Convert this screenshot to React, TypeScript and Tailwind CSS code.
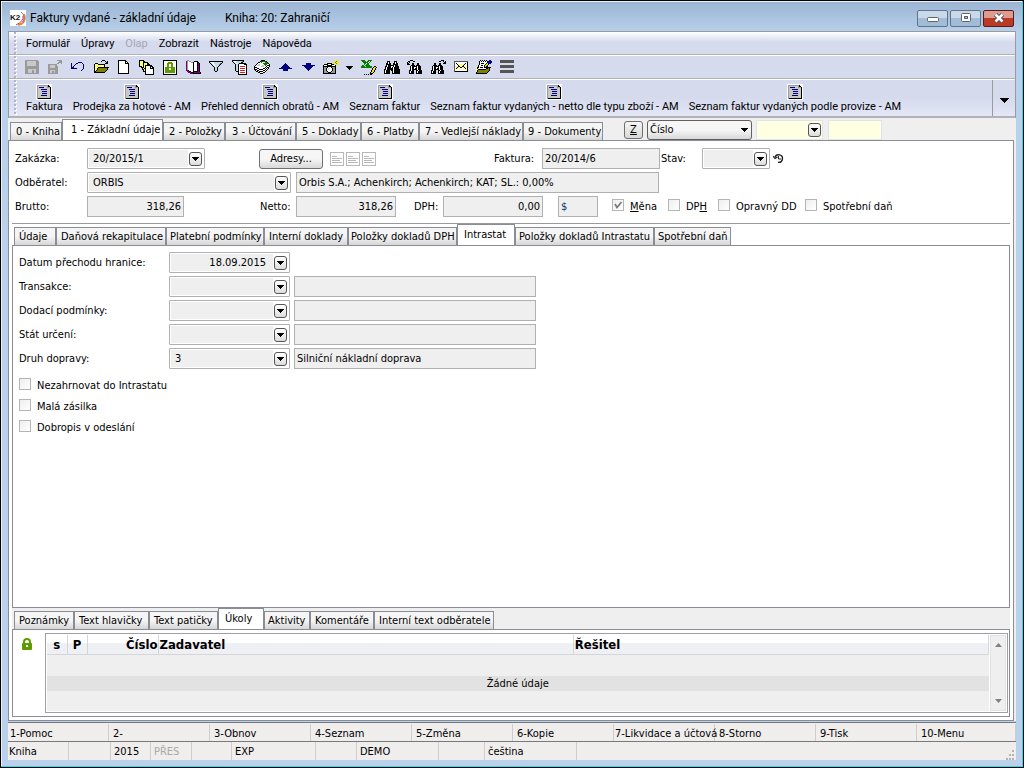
import type { ReactNode } from "react"
import clsx from "clsx"

const COLORS: Record<string, string> = {
  k: "#000000",
  w: "#ffffff",
  n: "#000080",
  b: "#0000ff",
  y: "#ffff7a",
  Y: "#f2e600",
  o: "#808000",
  g: "#9a9a9a",
  l: "#c8c8c8",
  G: "#008000",
  L: "#5c9c00",
  r: "#d02020",
  p: "#800080",
  d: "#555555",
  t: "#b8dce8",
}

const Pixels = ({ rows }: { rows: string[] }) => (
  <svg
    width="16"
    height="16"
    viewBox="0 0 16 16"
    shapeRendering="crispEdges"
    aria-hidden="true"
  >
    {rows.flatMap((row, y) =>
      row
        .split("")
        .map((c, x) =>
          COLORS[c] ? (
            <rect key={`${x}-${y}`} x={x} y={y} width="1" height="1" fill={COLORS[c]} />
          ) : null
        )
    )}
  </svg>
)

const SAVE = [
  ".ggggggggggggg..",
  ".gglllllllllggg.",
  ".gglllllllllggg.",
  ".gglllllllllggg.",
  ".gglllllllllggg.",
  ".gglllllllllggg.",
  ".gggggggggggggg.",
  ".gggggggggggggg.",
  ".gggggggggggggg.",
  ".gggllllllllggg.",
  ".gggllllggllggg.",
  ".gggllllggllggg.",
  ".gggllllggllggg.",
  ".gggggggggggggg.",
]

const SAVE_AS = [
  "..........ggggg.",
  "............ggg.",
  "...........gggg.",
  "..........gg..g.",
  ".ggggggggg......",
  ".gglllllgg......",
  ".gglllllggg.....",
  ".gglllllggg.....",
  ".gggggggggg.....",
  ".gggggggggg.....",
  ".gglllllggg.....",
  ".ggllgglggg.....",
  ".ggllgglggg.....",
  ".gggggggggg.....",
]

const UNDO = [
  "................",
  "................",
  "........nnnn....",
  ".n....nn....n...",
  ".n...n.......n..",
  ".n..n........n..",
  ".n.n.........n..",
  ".nnn.........n..",
  ".nnnnnn......n..",
  "............n...",
  "...........n....",
]

const OPEN = [
  ".........kkk....",
  "........k...k.k.",
  ".............kk.",
  "..kkk.......kkk.",
  ".kyyykkkkkkk....",
  ".kyyyyyyyyyk....",
  ".kyyyyyyyyyk....",
  ".kyyykkkkkkkkkkk",
  ".kyykoooooooook.",
  ".kyykoooooooook.",
  ".kykoooooooook..",
  ".kkoooooooook...",
  ".kkkkkkkkkkk....",
]

const NEW = [
  "..kkkkkkkk......",
  "..kwwwwwwkk.....",
  "..kwwwwwwkwk....",
  "..kwwwwwwkkkk...",
  "..kwwwwwwwwwk...",
  "..kwwwwwwwwwk...",
  "..kwwwwwwwwwk...",
  "..kwwwwwwwwwk...",
  "..kwwwwwwwwwk...",
  "..kwwwwwwwwwk...",
  "..kwwwwwwwwwk...",
  "..kwwwwwwwwwk...",
  "..kwwwwwwwwwk...",
  "..kkkkkkkkkkk...",
]

const COPIES = [
  "kkkkk...........",
  "kyyykk..........",
  "kyyykkkkk.......",
  "kyyykyyykk......",
  "kyyykyyykkk.....",
  "kyyykykkkkkkk...",
  "kkkykykwwwwkkk..",
  "..kkkykwwwwkwkk.",
  "...kykkwwwwkkkk.",
  "...kkykwwwwwwwk.",
  "....kykwwwwwwwk.",
  "....kkkwwwwwwwk.",
  "......kwwwwwwwk.",
  "......kwwwwwwwk.",
  "......kkkkkkkkk.",
]

const LOCK = [
  ".kkkkkkkkkkkkkk.",
  ".kwwwwwwwwwwwwk.",
  ".kwwwwLLLLwwwwk.",
  ".kwwwLLLLLLwwwk.",
  ".kwwwLLwwLLwwwk.",
  ".kwwwLLwwLLwwwk.",
  ".kwwwLLwwLLwwwk.",
  ".kwLLLLLLLLLLwk.",
  ".kwLLLLwwLLLLwk.",
  ".kwLLLLwwLLLLwk.",
  ".kwLLLLLLLLLLwk.",
  ".kwLLLLLLLLLLwk.",
  ".kwLLLLLLLLLLwk.",
  ".kwwwwwwwwwwwwk.",
  ".kkkkkkkkkkkkkk.",
]

const BOOK = [
  "..gg............",
  ".pgwgg...kkkk...",
  ".pgwwwggkwwwkk..",
  ".pgwwwwwkwwwkpk.",
  ".pgwwwwwkwwwkpk.",
  ".pgwwwwwkwwwkpk.",
  ".pgwwwwwkwwwkpk.",
  ".pgwwwwwkwwwkpk.",
  ".pgwwwwwkwwwkpk.",
  ".pgwwwwwkwwwkpk.",
  ".ppkwwwwkwwwkpk.",
  "..ppkkwwkkkkkpk.",
  "...pppkkkppppppk",
  ".....pppkkkkkkkk",
]

const FILTER = [
  "................",
  ".kkkkkkkkkkkkkk.",
  ".ktwwwttttttttk.",
  "..ktwwttttttok..",
  "...ktwwttttok...",
  "....ktwttttk....",
  ".....ktwttk.....",
  "......kttk......",
  "......kttk......",
  "......kttk......",
  "......kttk......",
  ".......kk.......",
]

const FILTER_DOC = [
  ".kkkkkkkkkkkk...",
  ".ktwwttttttok...",
  "..ktwtttttkk....",
  "...ktwttkkkkkkk.",
  "....kttkwwwwwkkk",
  "....kttkwwwwwwwk",
  "....kttkwrrrrrwk",
  "....kttkwwwwwwwk",
  "....kttkwrrrrrwk",
  "....kttkwwwwwwwk",
  "....kttkwrrrrrwk",
  ".....kkkwwwwwwwk",
  ".......kwrrrrrwk",
  ".......kwwwwwwwk",
  ".......kkkkkkkkk",
]

const STACK = [
  ".......kkkk.....",
  "......kGGGGGk...",
  "....kkwGwwwGGk..",
  "...kwwwwwGGGGGk.",
  "..kwllwwwwGGGwwk",
  ".kwlllwwllwGwkkk",
  "kwwwwwwlllwwkwwk",
  "kkkwwwwwwwwkwkk.",
  "kwwkkwwwwkkwkwk.",
  "kkkwwkkkkwwkwk..",
  ".kwkkwwwwkkwk...",
  "..kkwkkkkwwk....",
  "....kkwwwkk.....",
  "......kkk.......",
]

const UP = [
  "................",
  "................",
  "................",
  "........n.......",
  ".......nnn......",
  "......nnnnn.....",
  ".....nnnnnnn....",
  "....nnnnnnnnn...",
  "..nnnnnnnnnnnnn.",
  "......nnnnn.....",
  "......nnnnn.....",
]

const DOWN = [
  "................",
  "................",
  "................",
  "......nnnnn.....",
  "......nnnnn.....",
  "..nnnnnnnnnnnnn.",
  "....nnnnnnnnn...",
  ".....nnnnnnn....",
  "......nnnnn.....",
  ".......nnn......",
  "........n.......",
]

const CAMERA = [
  "...........Y.Y.Y",
  "............YoY.",
  "..........YYoYYY",
  "....kkkkk...YoY.",
  ".kkkkwwwkkkY.Y.Y",
  "kwwwkkkkkwwwk...",
  "kkkkkkkkkkkkk...",
  "kgggkwwwkgggk...",
  "kggkwttwwkggk...",
  "kggkwtwwwkggk...",
  "kggkwwwwwkggk...",
  "kgggkwwwkgggk...",
  "kggggkkkggggk...",
  "kkkkkkkkkkkkk...",
]

const EXCEL = [
  "GGGG...GGGG.....",
  ".GGGG.GGwG......",
  "..GGGGGwG.......",
  "...GGwGG........",
  "...GwGGG........",
  ".GGwGGGGG.......",
  "GGGG.GGGGGG..kk.",
  "GGGGGGGGGGG.kYYk",
  "...........kYYk.",
  "...........kYYk.",
  "..........kYYk..",
  "..........kYYk..",
  ".........kYYk...",
  ".........kkk....",
  "...k.k.k.kk.....",
]

const FIND = [
  "................",
  "...kkk....kkk...",
  "...kwk....kwk...",
  "..kkwkk..kkwkk..",
  "..kkkkk..kkkkk..",
  "..kwkkkkkkwkkk..",
  ".kkwkkkwwkwkkkk.",
  ".kwkkkkwkwkkkkk.",
  ".kwkkkkkkwkkkkk.",
  "kkwkkkkkkwkkkkkk",
  "kwkkkk.kkwkkkkkk",
  "kwkkkk..kwkkkkkk",
  "kwkkkk..kwkkkkkk",
  "kkkkkk..kkkkkkkk",
]

const FIND_PREV = [
  "...kkk..........",
  ".kk...kk........",
  "k.k.............",
  "kk...kk...kk....",
  "kkk..kk...kk....",
  "....kkkk.kkkk...",
  "...kwkkkkkwkkk..",
  "...kwkkwwkwkkk..",
  "...kwkkwkkwkkk..",
  "...kwkkkkkwkkk..",
  "..kkwkk..kkwkkk.",
  "..kwkkk..kwkkkk.",
  "..kwkkk..kwkkkk.",
  "..kkkkk..kkkkkk.",
]

const FIND_NEXT = [
  "...........kkk..",
  ".........kk..k.k",
  "..............kk",
  "....kk...kk..kkk",
  "....kk...kk.....",
  "...kkkk.kkkk....",
  "..kwkkkkkwkkk...",
  "..kwkkwwkwkkk...",
  "..kwkkwkkwkkk...",
  "..kwkkkkkwkkk...",
  ".kkwkk..kkwkkk..",
  ".kwkkk..kwkkkk..",
  ".kwkkk..kwkkkk..",
  ".kkkkk..kkkkkk..",
]

const MAIL = [
  "................",
  ".dddddddddddddd.",
  ".dywwwwwwwwwwyk.",
  ".dwkwwwwwwwwkwk.",
  ".dwwkyyyyyykwwk.",
  ".dwwwkyyyykwwwk.",
  ".dwyykkyykkyywk.",
  ".dwykywkkwykywk.",
  ".dwkyyywwyyykwk.",
  ".dyywwwwwwwwyyk.",
  ".dywwwwwwwwwwyk.",
  ".dkkkkkkkkkkkkk.",
]

const NOTE = [
  "....k.k.k.k..nn.",
  "...kwkwkwkwknnnn",
  "...kwwwwwwwknbnn",
  "...kwkkkwwkYnnn.",
  "...kwwwwwkYYk...",
  "..kwwkkwkYYk....",
  "..kwwwwwkYkk....",
  "ykkwkkkwkkkkkkk.",
  "ykwwwwwwwwkkok..",
  "yykkkkkkkkoook..",
  "ykoooooooooook..",
  "ykooooooooook...",
  "kooooooooook....",
  "kkkkkkkkkkk.....",
]

const LINES = [
  ".dddddddddddddd.",
  ".dddddddddddddd.",
  ".dddddddddddddd.",
  "................",
  "................",
  ".dddddddddddddd.",
  ".dddddddddddddd.",
  ".dddddddddddddd.",
  "................",
  "................",
  ".dddddddddddddd.",
  ".dddddddddddddd.",
  ".dddddddddddddd.",
]

const REPORT = [
  "wwwwwwwwwwwwwwww",
  "wgggggggggggkwww",
  "wglllllllllgkkww",
  "wglnnnnnlllgggkw",
  "wgllllllllllllkw",
  "wglllnnnnnnlllkw",
  "wgllllllllllllkw",
  "wgllllnnnnnlllkw",
  "wgllllllllllllkw",
  "wgllllnnnnnlllkw",
  "wgllllllllllllkw",
  "wglllnnnnnnlllkw",
  "wgllllllllllllkw",
  "wgllllllllllllkw",
  "wgkkkkkkkkkkkkkw",
  "wwwwwwwwwwwwwwww",
]

const tools = [
  { label: "Uložit", rows: SAVE },
  { label: "Uložit jako", rows: SAVE_AS },
  { label: "Zpět", rows: UNDO },
  { label: "Otevřít", rows: OPEN },
  { label: "Nový", rows: NEW },
  { label: "Kopie", rows: COPIES },
  { label: "Zámek", rows: LOCK },
  { label: "Kniha", rows: BOOK },
  { label: "Filtr", rows: FILTER },
  { label: "Filtr záznamů", rows: FILTER_DOC },
  { label: "Doklady", rows: STACK },
  { label: "Nahoru", rows: UP },
  { label: "Dolů", rows: DOWN },
  { label: "Snímek", rows: CAMERA },
]

const moreTools = [
  { label: "Excel", rows: EXCEL },
  { label: "Hledat", rows: FIND },
  { label: "Hledat předchozí", rows: FIND_PREV },
  { label: "Hledat další", rows: FIND_NEXT },
  { label: "E-mail", rows: MAIL },
  { label: "Poznámka", rows: NOTE },
  { label: "Seznam", rows: LINES },
]

const reports = [
  "Faktura",
  "Prodejka za hotové - AM",
  "Přehled denních obratů - AM",
  "Seznam faktur",
  "Seznam faktur vydaných - netto dle typu zboží - AM",
  "Seznam faktur vydaných podle provize - AM",
]

type TabItem = { label: string; className: string; active?: boolean }

const mainTabs: TabItem[] = [
  { label: "0 - Kniha", className: "w-[52px] pl-[5px]" },
  { label: "1 - Základní údaje", className: "w-[101px] pl-2", active: true },
  { label: "2 - Položky", className: "w-[62px] pl-[5px]" },
  { label: "3 - Účtování", className: "w-[71px] pl-[6px]" },
  { label: "5 - Doklady", className: "w-[65px] pl-[5px]" },
  { label: "6 - Platby", className: "w-[58px] pl-[5px]" },
  { label: "7 - Vedlejší náklady", className: "w-[104px] pl-[5px]" },
  { label: "9 - Dokumenty", className: "w-[80px] pl-1" },
]

const detailTabs: TabItem[] = [
  { label: "Údaje", className: "w-[42px] pl-1" },
  { label: "Daňová rekapitulace", className: "w-[110px] pl-1" },
  { label: "Platební podmínky", className: "w-[98px] pl-[3px]" },
  { label: "Interní doklady", className: "w-[84px] pl-1" },
  { label: "Položky dokladů DPH", className: "w-[109px] pl-[2px]" },
  { label: "Intrastat", className: "w-[58px] pl-[6px]", active: true },
  { label: "Položky dokladů Intrastatu", className: "w-[139px] pl-[3px]" },
  { label: "Spotřební daň", className: "w-[77px] pl-[3px]" },
]

const bottomTabs: TabItem[] = [
  { label: "Poznámky", className: "w-[60px] pl-1" },
  { label: "Text hlavičky", className: "w-[75px] pl-1" },
  { label: "Text patičky", className: "w-[69px] pl-1" },
  { label: "Úkoly", className: "w-[46px] pl-[6px]", active: true },
  { label: "Aktivity", className: "w-[46px] pl-[3px]" },
  { label: "Komentáře", className: "w-[64px] pl-1" },
  { label: "Interní text odběratele", className: "w-[120px] pl-1" },
]

const functionKeys = [
  "1-Pomoc",
  "2-",
  "3-Obnov",
  "4-Seznam",
  "5-Změna",
  "6-Kopie",
  "7-Likvidace a účtová",
  "8-Storno",
  "9-Tisk",
  "10-Menu",
]

const statusCells = [
  { text: "Kniha", className: "w-[61px]" },
  { text: "", className: "w-[42px]" },
  { text: "2015", className: "w-[40px]" },
  { text: "PŘES", className: "w-[41px] text-[#a8a8a8]" },
  { text: "", className: "w-[40px]" },
  { text: "EXP", className: "w-[84px]" },
  { text: "", className: "w-[41px]" },
  { text: "DEMO", className: "w-[82px]" },
  { text: "", className: "w-[46px]" },
  { text: "čeština", className: "w-[92px]" },
]

const Tabs = ({ items }: { items: TabItem[] }) => (
  <div role="tablist" className="flex items-end self-end">
    {items.map((tab) => (
      <button
        key={tab.label}
        type="button"
        role="tab"
        aria-selected={!!tab.active}
        className={clsx(
          "shrink-0 whitespace-nowrap border border-b-0 border-[#8a8c96] text-left",
          tab.className,
          tab.active
            ? "-mb-px h-[22px] bg-white pb-px"
            : "h-[18px] bg-linear-to-b from-[#f5f5f5] from-50% to-[#d6d6d6] pt-px"
        )}
      >
        {tab.label}
      </button>
    ))}
  </div>
)

const Arrow = () => (
  <svg width="7" height="4" viewBox="0 0 7 4" shapeRendering="crispEdges" aria-hidden="true">
    <path d="M0 0h7v1H6v1H5v1H4v1H3V3H2V2H1V1H0z" fill="#000" />
  </svg>
)

type FieldProps = {
  id: string
  label: string
  value?: string
  className?: string
  inputClassName?: string
}

const TextField = ({ id, label, value = "", className }: FieldProps) => (
  <input
    id={id}
    aria-label={label}
    readOnly
    defaultValue={value}
    className={clsx(
      "h-[21px] shrink-0 border border-[#b0b0b0] bg-[#efefef] px-[2px] pb-px outline-none",
      className
    )}
  />
)

const ComboField = ({ id, label, value = "", className, inputClassName }: FieldProps) => (
  <div
    className={clsx(
      "flex h-[21px] shrink-0 items-center rounded-[1px] border border-[#b0b0b0] bg-white p-px",
      className
    )}
  >
    <input
      id={id}
      aria-label={label}
      readOnly
      defaultValue={value}
      className={clsx(
        "h-full w-0 min-w-0 flex-1 bg-[#efefef] px-1 pb-px outline-none",
        inputClassName
      )}
    />
    <button
      type="button"
      aria-label={`${label} - výběr`}
      className="mx-px flex h-[14px] w-[13px] items-center justify-center rounded-[3px] border border-[#555] bg-linear-to-b from-white to-[#ddd]"
    >
      <Arrow />
    </button>
  </div>
)

type CheckProps = { children: ReactNode; checked?: boolean; className?: string }

const Check = ({ children, checked, className }: CheckProps) => (
  <label className={clsx("flex shrink-0 items-start whitespace-nowrap", className)}>
    <span className="relative mr-[6px] h-3 w-3">
      <input
        type="checkbox"
        defaultChecked={checked}
        className="block h-3 w-3 appearance-none border border-[#b5b5b5] bg-linear-to-br from-[#eee] to-white"
      />
      {checked && (
        <svg className="absolute left-0 top-0" width="12" height="12" viewBox="0 0 12 12" aria-hidden="true">
          <path d="M3 5l2 3.5L9.5 3" fill="none" stroke="#777" strokeWidth="1.6" />
        </svg>
      )}
    </span>
    <span className="pt-px">{children}</span>
  </label>
)

const Grip = () => (
  <svg className="ml-[5px] h-full w-1 shrink-0" aria-hidden="true">
    <defs>
      <pattern id="grip" width="4" height="4" patternUnits="userSpaceOnUse">
        <rect x="1" y="1" width="2" height="2" fill="#fff" />
        <rect width="2" height="2" fill="#b0b4c4" />
      </pattern>
    </defs>
    <rect width="4" height="100%" fill="url(#grip)" />
  </svg>
)

const ToolButton = ({ label, rows }: { label: string; rows: string[] }) => (
  <button type="button" aria-label={label} className="mr-[7px] h-4 w-4">
    <Pixels rows={rows} />
  </button>
)

const LockIcon = () => (
  <svg width="12" height="13" viewBox="0 0 12 13" aria-hidden="true">
    <path d="M3 6V4a3 3 0 0 1 6 0v2" fill="none" stroke="#5c9c00" strokeWidth="2" />
    <rect x="1" y="5" width="10" height="7" rx="1" fill="#5c9c00" />
    <rect x="5" y="7" width="2" height="2" fill="#fff" />
  </svg>
)

const TitleBar = () => (
  <header className="flex h-[30px] shrink-0 items-center pt-1 font-['Roboto',sans-serif] text-[12px]">
    <svg className="ml-[2px] mr-1" width="16" height="16" viewBox="0 0 16 16" aria-hidden="true">
      <rect width="16" height="16" fill="#fff" />
      <path d="M8 15Q17 13 14 4" fill="none" stroke="#e08a3c" strokeWidth="2" />
      <path d="M6 15Q14 11 13 6" fill="none" stroke="#c43a4a" strokeWidth="1" />
      <path d="M11 2Q16 6 13 12" fill="none" stroke="#9a6aa8" strokeWidth="1" />
      <text x="0" y="10" fontSize="8" fontWeight="bold" fill="#111" fontFamily="Liberation Sans, sans-serif">
        K2
      </text>
    </svg>
    <h1>Faktury vydané - základní údaje</h1>
    <span className="ml-[29px]">Kniha: 20: Zahraničí</span>
    <div className="ml-auto mr-[2px] flex gap-[2px]">
      <button
        type="button"
        aria-label="Minimalizovat"
        className="flex h-[17px] w-[31px] items-center justify-center rounded-[2px] border border-[#5f7389] bg-linear-to-b from-[#c9d9ea] from-50% to-[#a3bcd6] to-50%"
      >
        <svg className="mt-1" width="12" height="6" viewBox="0 0 12 6" aria-hidden="true">
          <rect x="0.5" y="0.5" width="11" height="4" rx="1" fill="#fff" stroke="#5b6470" />
        </svg>
      </button>
      <button
        type="button"
        aria-label="Obnovit"
        className="flex h-[17px] w-[31px] items-center justify-center rounded-[2px] border border-[#5f7389] bg-linear-to-b from-[#c9d9ea] from-50% to-[#a3bcd6] to-50%"
      >
        <svg width="12" height="10" viewBox="0 0 12 10" aria-hidden="true">
          <rect x="1.5" y="0.5" width="9" height="8" rx="1" fill="#fff" stroke="#5b6470" />
          <rect x="4.5" y="3.5" width="3" height="2" fill="#a9c0d8" stroke="#5b6470" />
        </svg>
      </button>
      <button
        type="button"
        aria-label="Zavřít"
        className="flex h-[17px] w-[31px] items-center justify-center rounded-[2px] border border-[#5a1a1e] bg-linear-to-b from-[#dd9c8e] from-50% to-[#bb3a24] to-50%"
      >
        <svg width="12" height="10" viewBox="0 0 12 10" aria-hidden="true">
          <path d="M2.500 1.500l7 7M9.500 1.500l-7 7" stroke="#4d4f5c" strokeWidth="4.500" />
          <path d="M2.500 1.500l7 7M9.500 1.500l-7 7" stroke="#fff" strokeWidth="2.500" />
        </svg>
      </button>
    </div>
  </header>
)

const Toolbars = () => (
  <div className="shrink-0 border border-b-0 border-[#9a9aa2] bg-[#d5daed] font-['Roboto',Arial,sans-serif]">
    <nav className="flex h-[23px] items-center border-b border-[#b2b2b6] bg-linear-to-b from-white to-[#d5daed] to-45%">
      <Grip />
      <div className="ml-2 flex gap-[11px] pt-[2px]">
        <button type="button">Formulář</button>
        <button type="button">Úpravy</button>
        <button type="button" disabled className="text-[#a6a8b4]">
          Olap
        </button>
        <button type="button">Zobrazit</button>
        <button type="button">Nástroje</button>
        <button type="button">Nápověda</button>
      </div>
    </nav>
    <div className="flex h-[24px] items-center border-b border-t border-b-[#b2b2b6] border-t-white">
      <Grip />
      <div className="ml-[6px] flex items-center pt-[2px]">
        {tools.map((tool) => (
          <ToolButton key={tool.label} {...tool} />
        ))}
        <button type="button" aria-label="Další možnosti" className="mr-2 w-[7px]">
          <Arrow />
        </button>
        {moreTools.map((tool) => (
          <ToolButton key={tool.label} {...tool} />
        ))}
      </div>
    </div>
    <div className="flex h-[39px] border-b-2 border-t border-b-[#b2b2b6] border-t-white bg-linear-to-b from-[#d5daed] from-50% to-[#e3e7f6]">
      <Grip />
      <div className="ml-[3px] flex pt-1">
        {reports.map((report) => (
          <button
            key={report}
            type="button"
            className="flex flex-col items-center whitespace-nowrap px-[5px] leading-[14px]"
          >
            <Pixels rows={REPORT} />
            {report}
          </button>
        ))}
      </div>
      <button
        type="button"
        aria-label="Další sestavy"
        className="ml-auto flex w-[23px] items-center justify-center border-l border-[#9a9aa2] pt-1"
      >
        <svg width="9" height="5" viewBox="0 0 9 5" shapeRendering="crispEdges" aria-hidden="true">
          <path d="M0 0h9v1H8v1H7v1H6v1H5v1H4V4H3V3H2V2H1V1H0z" />
        </svg>
      </button>
    </div>
  </div>
)

const InvoiceHeader = () => (
  <section className="mx-[3px] flex shrink-0 flex-col gap-[3px] border-b border-[#9a9a9e] pb-[6px] pl-[3px] pt-[7px]">
    <div className="flex h-[21px] items-center">
      <label htmlFor="order" className="w-[72px]">
        Zakázka:
      </label>
      <ComboField id="order" label="Zakázka" value="20/2015/1" className="w-[118px]" />
      <button
        type="button"
        className="ml-[54px] h-[20px] w-[64px] rounded-[3px] border border-[#707070] bg-linear-to-b from-[#f6f6f6] from-50% to-[#d8d8d8]"
      >
        Adresy...
      </button>
      <div className="ml-[7px] flex gap-[2px]">
        {["Adresa 1", "Adresa 2", "Adresa 3"].map((name) => (
          <button key={name} type="button" aria-label={name}>
            <svg width="14" height="14" viewBox="0 0 14 14" shapeRendering="crispEdges" aria-hidden="true">
              <rect x="0.5" y="0.5" width="13" height="13" fill="#fff" stroke="#b8b8b8" />
              <path d="M2 4.5h5M2 6.5h10M2 8.5h8M2 10.5h10" stroke="#b8b8b8" />
            </svg>
          </button>
        ))}
      </div>
      <label htmlFor="invoice" className="ml-[118px] w-[48px]">
        Faktura:
      </label>
      <TextField id="invoice" label="Faktura" value="20/2014/6" className="w-[118px]" />
      <label htmlFor="state" className="ml-px w-[41px]">
        Stav:
      </label>
      <ComboField id="state" label="Stav" className="w-[68px]" />
      <button type="button" aria-label="Historie stavu" className="ml-[3px]">
        <svg width="11" height="11" viewBox="0 0 11 11" fill="none" stroke="#222" aria-hidden="true">
          <path d="M2 4.500A3.800 3.800 0 1 1 5 9.300" strokeWidth="1.400" />
          <path d="M0 3l2 2.500L4.500 4" strokeWidth="1.200" />
          <path d="M5.500 3v3H8" />
        </svg>
      </button>
    </div>
    <div className="flex h-[21px] items-center">
      <label htmlFor="customer" className="w-[72px]">
        Odběratel:
      </label>
      <ComboField id="customer" label="Odběratel" value="ORBIS" className="w-[204px]" />
      <TextField
        id="customer-name"
        label="Název odběratele"
        value="Orbis S.A.; Achenkirch; Achenkirch; KAT; SL.: 0,00%"
        className="ml-[5px] w-[363px]"
      />
    </div>
    <div className="flex h-[21px] items-center">
      <label htmlFor="gross" className="w-[72px]">
        Brutto:
      </label>
      <TextField id="gross" label="Brutto" value="318,26" className="w-[97px] text-right" />
      <label htmlFor="net" className="ml-[76px] w-[36px]">
        Netto:
      </label>
      <TextField id="net" label="Netto" value="318,26" className="w-[100px] text-right" />
      <label htmlFor="vat" className="ml-[18px] w-[29px]">
        DPH:
      </label>
      <TextField id="vat" label="DPH" value="0,00" className="w-[100px] text-right" />
      <TextField id="currency" label="Kód měny" value="$" className="ml-[15px] w-[40px] text-[#003c74]" />
      <Check checked className="ml-[14px] w-[56px]">
        <u>M</u>ěna
      </Check>
      <Check className="w-[50px]">
        DP<u>H</u>
      </Check>
      <Check className="w-[87px]">Opravný DD</Check>
      <Check>Spotřební daň</Check>
    </div>
  </section>
)

const intrastatRows = [
  { id: "transaction", label: "Transakce", value: "", text: "" },
  { id: "delivery", label: "Dodací podmínky", value: "", text: "" },
  { id: "country", label: "Stát určení", value: "", text: "" },
  { id: "transport", label: "Druh dopravy", value: "3", text: "Silniční nákladní doprava" },
]

const IntrastatPanel = () => (
  <section className="min-h-0 flex-1 overflow-hidden border border-[#8a8c96] bg-white pl-[6px] pt-[6px]">
    <div className="flex flex-col gap-[3px]">
      <div className="flex h-[21px] items-center">
        <label htmlFor="border-date" className="w-[150px]">
          Datum přechodu hranice:
        </label>
        <ComboField
          id="border-date"
          label="Datum přechodu hranice"
          value="18.09.2015"
          className="w-[121px]"
          inputClassName="pr-[7px] text-right"
        />
      </div>
      {intrastatRows.map((row) => (
        <div key={row.id} className="flex h-[21px] items-center">
          <label htmlFor={row.id} className="w-[150px]">
            {row.label}:
          </label>
          <ComboField id={row.id} label={row.label} value={row.value} className="w-[121px]" />
          <TextField
            id={`${row.id}-text`}
            label={`${row.label} - popis`}
            value={row.text}
            className="ml-1 w-[242px]"
          />
        </div>
      ))}
    </div>
    <div className="mt-[9px] flex flex-col gap-[6px]">
      <Check>Nezahrnovat do Intrastatu</Check>
      <Check>Malá zásilka</Check>
      <Check>Dobropis v odeslání</Check>
    </div>
  </section>
)

const TasksPanel = () => (
  <section className="flex h-[88px] shrink-0 border border-[#8a8c96] bg-white">
    <div className="w-8 shrink-0 pl-2 pt-2">
      <LockIcon />
    </div>
    <div className="my-[3px] mr-[1px] flex min-w-0 flex-1 border border-[#a0a0a4] bg-white p-px">
      <table className="h-full w-full min-w-0 flex-1 table-fixed border-collapse">
        <colgroup>
          <col className="w-5" />
          <col className="w-5" />
          <col className="w-[71px]" />
          <col />
          <col />
        </colgroup>
        <thead>
          <tr className="h-[19px] bg-linear-to-b from-white from-40% to-[#eef0f4] to-45% text-[13px] leading-[17px]">
            <th className="border-b border-r border-[#d4d6da] p-0">s</th>
            <th className="border-b border-r border-[#d4d6da] p-0">P</th>
            <th className="border-b border-r border-[#d4d6da] p-0 text-right">Číslo</th>
            <th className="border-b border-r border-[#d4d6da] p-0 pl-px text-left">Zadavatel</th>
            <th className="border-b border-r border-[#d4d6da] p-0 pl-px text-left">Řešitel</th>
          </tr>
        </thead>
        <tbody className="bg-[#efefef]">
          <tr className="h-[22px]">
            <td colSpan={5} />
          </tr>
          <tr className="h-[15px] bg-[#e2e2e2]">
            <td colSpan={5} className="p-0 text-center">
              Žádné údaje
            </td>
          </tr>
          <tr>
            <td colSpan={5} />
          </tr>
        </tbody>
      </table>
      <div className="ml-px flex w-4 shrink-0 flex-col items-center justify-between border border-[#e2e2e2] bg-[#efefef] py-[7px]">
        <svg width="7" height="4" viewBox="0 0 7 4" aria-hidden="true">
          <path d="M0 4L3.500 0L7 4z" fill="#808080" />
        </svg>
        <svg width="7" height="4" viewBox="0 0 7 4" aria-hidden="true">
          <path d="M0 0L3.500 4L7 0z" fill="#808080" />
        </svg>
      </div>
    </div>
  </section>
)

const App = () => (
  <div className="flex h-screen min-h-[600px] flex-col overflow-hidden border border-black bg-[#b9d1ea] bg-linear-to-b from-[#9ab4d2] to-[#b9d1ea] to-[32px] pb-[7px] pl-[7px] pr-[7px] font-['DejaVu_Sans_Condensed','DejaVu_Sans',Tahoma,sans-serif] text-[11px] leading-[14px] text-black shadow-[inset_-1px_-1px_0_#35d5ee,inset_1px_1px_0_#e8f1fa]">
    <TitleBar />
    <Toolbars />
    <main className="flex min-h-0 flex-1 flex-col bg-[#efefef]">
      <div className="flex h-[22px] shrink-0 items-center pl-[2px] pt-[2px]">
        <Tabs items={mainTabs} />
        <button
          type="button"
          className="ml-[21px] h-[18px] w-[19px] rounded-[3px] border border-[#707070] bg-linear-to-b from-[#f6f6f6] to-[#d8d8d8]"
        >
          <u>Z</u>
        </button>
        <div className="ml-1 grid w-[105px] items-center">
          <select
            aria-label="Třídění"
            className="col-start-1 row-start-1 h-[20px] w-full appearance-none rounded-[3px] border border-[#606060] bg-linear-to-b from-[#f6f6f6] from-50% to-[#d8d8d8] px-[2px] outline-none"
          >
            <option>Číslo</option>
          </select>
          <span className="pointer-events-none col-start-1 row-start-1 mr-1 justify-self-end">
            <Arrow />
          </span>
        </div>
        <div className="ml-1 flex h-[20px] w-[67px] items-center border border-[#dfe3ee] bg-[#ffffe1]">
          <input aria-label="Hledat od" className="h-full w-0 flex-1 outline-none" />
          <button
            type="button"
            aria-label="Hledat od - výběr"
            className="mr-px flex h-[14px] w-[13px] items-center justify-center rounded-[3px] border border-[#555] bg-linear-to-b from-white to-[#ddd]"
          >
            <Arrow />
          </button>
        </div>
        <input
          aria-label="Hledat do"
          className="ml-[5px] h-[20px] w-[54px] border border-[#dfe3ee] bg-[#ffffe1] outline-none"
        />
      </div>
      <div className="mr-[2px] flex min-h-0 flex-1 flex-col border border-[#8a8c96] bg-white">
        <InvoiceHeader />
        <div className="flex min-h-0 flex-1 flex-col px-[3px] pb-[3px]">
          <div className="flex h-[21px] shrink-0 pl-[2px]">
            <Tabs items={detailTabs} />
          </div>
          <IntrastatPanel />
          <div className="flex h-[21px] shrink-0 bg-[#efefef] pl-[2px]">
            <Tabs items={bottomTabs} />
          </div>
          <TasksPanel />
        </div>
      </div>
    </main>
    <footer className="mt-px shrink-0 border-t border-[#77787c] bg-[#f0eded]">
      <div className="grid h-[19px] grid-cols-[repeat(9,101px)_1fr] border-b border-[#77797c] pt-px">
        {functionKeys.map((key, i) => (
          <button
            key={key}
            type="button"
            className={clsx(
              "whitespace-nowrap border-r border-[#d0cdcd] pt-[2px] text-left",
              i === 0 && "pl-[2px]",
              i === 6 && "pl-px",
              i !== 0 && i !== 6 && "pl-1"
            )}
          >
            {key}
          </button>
        ))}
      </div>
      <div className="flex h-[18px] items-stretch">
        {statusCells.map((cell, i) => (
          <span
            key={i}
            className={clsx(
              "border-r border-[#d0cdcd] pt-[3px]",
              i === 0 ? "pl-px" : "pl-[3px]",
              cell.className
            )}
          >
            {cell.text}
          </span>
        ))}
        <svg className="ml-auto mr-px self-end" width="10" height="10" viewBox="0 0 10 10" fill="#b5b2b2" aria-hidden="true">
          <path d="M7 0h2v2H7zM7 4h2v2H7zM7 8h2v2H7zM4 4h2v2H4zM4 8h2v2H4zM1 8h2v2H1z" />
        </svg>
      </div>
    </footer>
  </div>
)

export default App
